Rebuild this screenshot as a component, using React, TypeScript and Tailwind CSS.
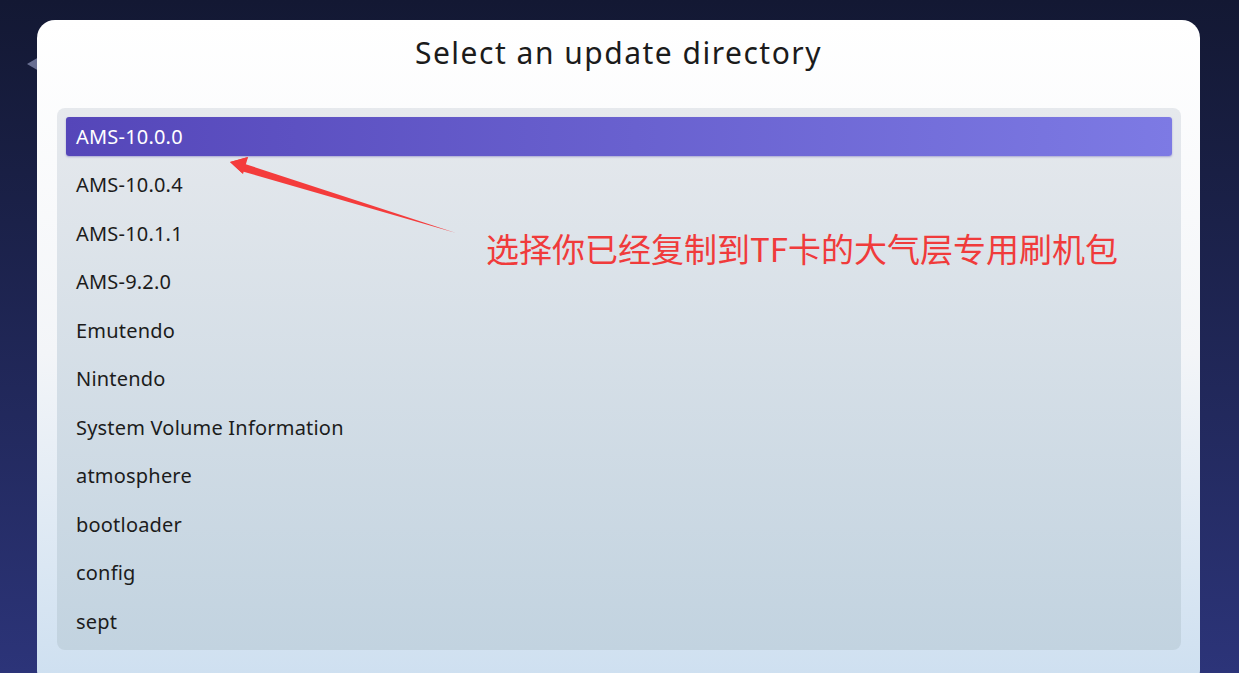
import React from "react";

const items = [
  "AMS-10.0.0",
  "AMS-10.0.4",
  "AMS-10.1.1",
  "AMS-9.2.0",
  "Emutendo",
  "Nintendo",
  "System Volume Information",
  "atmosphere",
  "bootloader",
  "config",
  "sept",
];

export default function App() {
  return (
    <div
      className="relative w-full h-[673px] overflow-hidden bg-gradient-to-b from-[#131833] to-[#2c3479] pt-[20px]"
      style={{ fontFamily: '"Noto Sans", "Open Sans", sans-serif' }}
    >
      {/* faint background triangle */}
      <div className="absolute left-[27px] top-[57px] w-0 h-0 border-y-[7px] border-y-transparent border-r-[12px] border-r-[#8c93b8] opacity-70" />

      <div className="relative ml-[37px] w-[1163px] h-[668px] rounded-[18px] bg-gradient-to-b from-[#ffffff] via-[#f3f5f8] to-[#cddff0]">
        <div className="pt-[13px] h-[88px] text-center text-[30px] tracking-[1.5px] leading-[40px] text-[#1b1b1b]">
          Select an update directory
        </div>
        <div className="ml-[20px] w-[1124px] h-[542px] rounded-[8px] bg-gradient-to-b from-[#e6e9ed] to-[#c2d3e0] px-[9px] pt-[9px] flex flex-col gap-[9.5px]">
          {items.map((name, i) => (
            <div
              key={name}
              className={
                i === 0
                  ? "h-[39px] shrink-0 flex items-center pl-[10px] rounded-[3px] bg-gradient-to-r from-[#5546b9] to-[#7d7ae4] text-white text-[20px] tracking-[0.2px] shadow-[0_1px_2px_rgba(60,50,160,0.35)]"
                  : "h-[39px] shrink-0 flex items-center pl-[10px] text-[#1c1c1c] text-[20px] tracking-[0.2px]"
              }
            >
              {name}
            </div>
          ))}
        </div>
      </div>

      {/* annotation arrow */}
      <svg
        className="absolute left-0 top-0 pointer-events-none"
        width="1239"
        height="673"
        viewBox="0 0 1239 673"
      >
        <polygon
          points="230,162 248,157 245,164 456,233 241,171 243,174"
          fill="#f43c3c"
        />
        <polygon points="230,162 248,157 243,174" fill="#f43c3c" />
      </svg>

      <div
        className="absolute left-[486px] top-[226px] text-[33px] leading-[44px] text-[#f03b3b] whitespace-nowrap"
        style={{ fontFamily: '"Noto Sans CJK SC", "Noto Sans", sans-serif' }}
      >
        选择你已经复制到TF卡的大气层专用刷机包
      </div>
    </div>
  );
}
